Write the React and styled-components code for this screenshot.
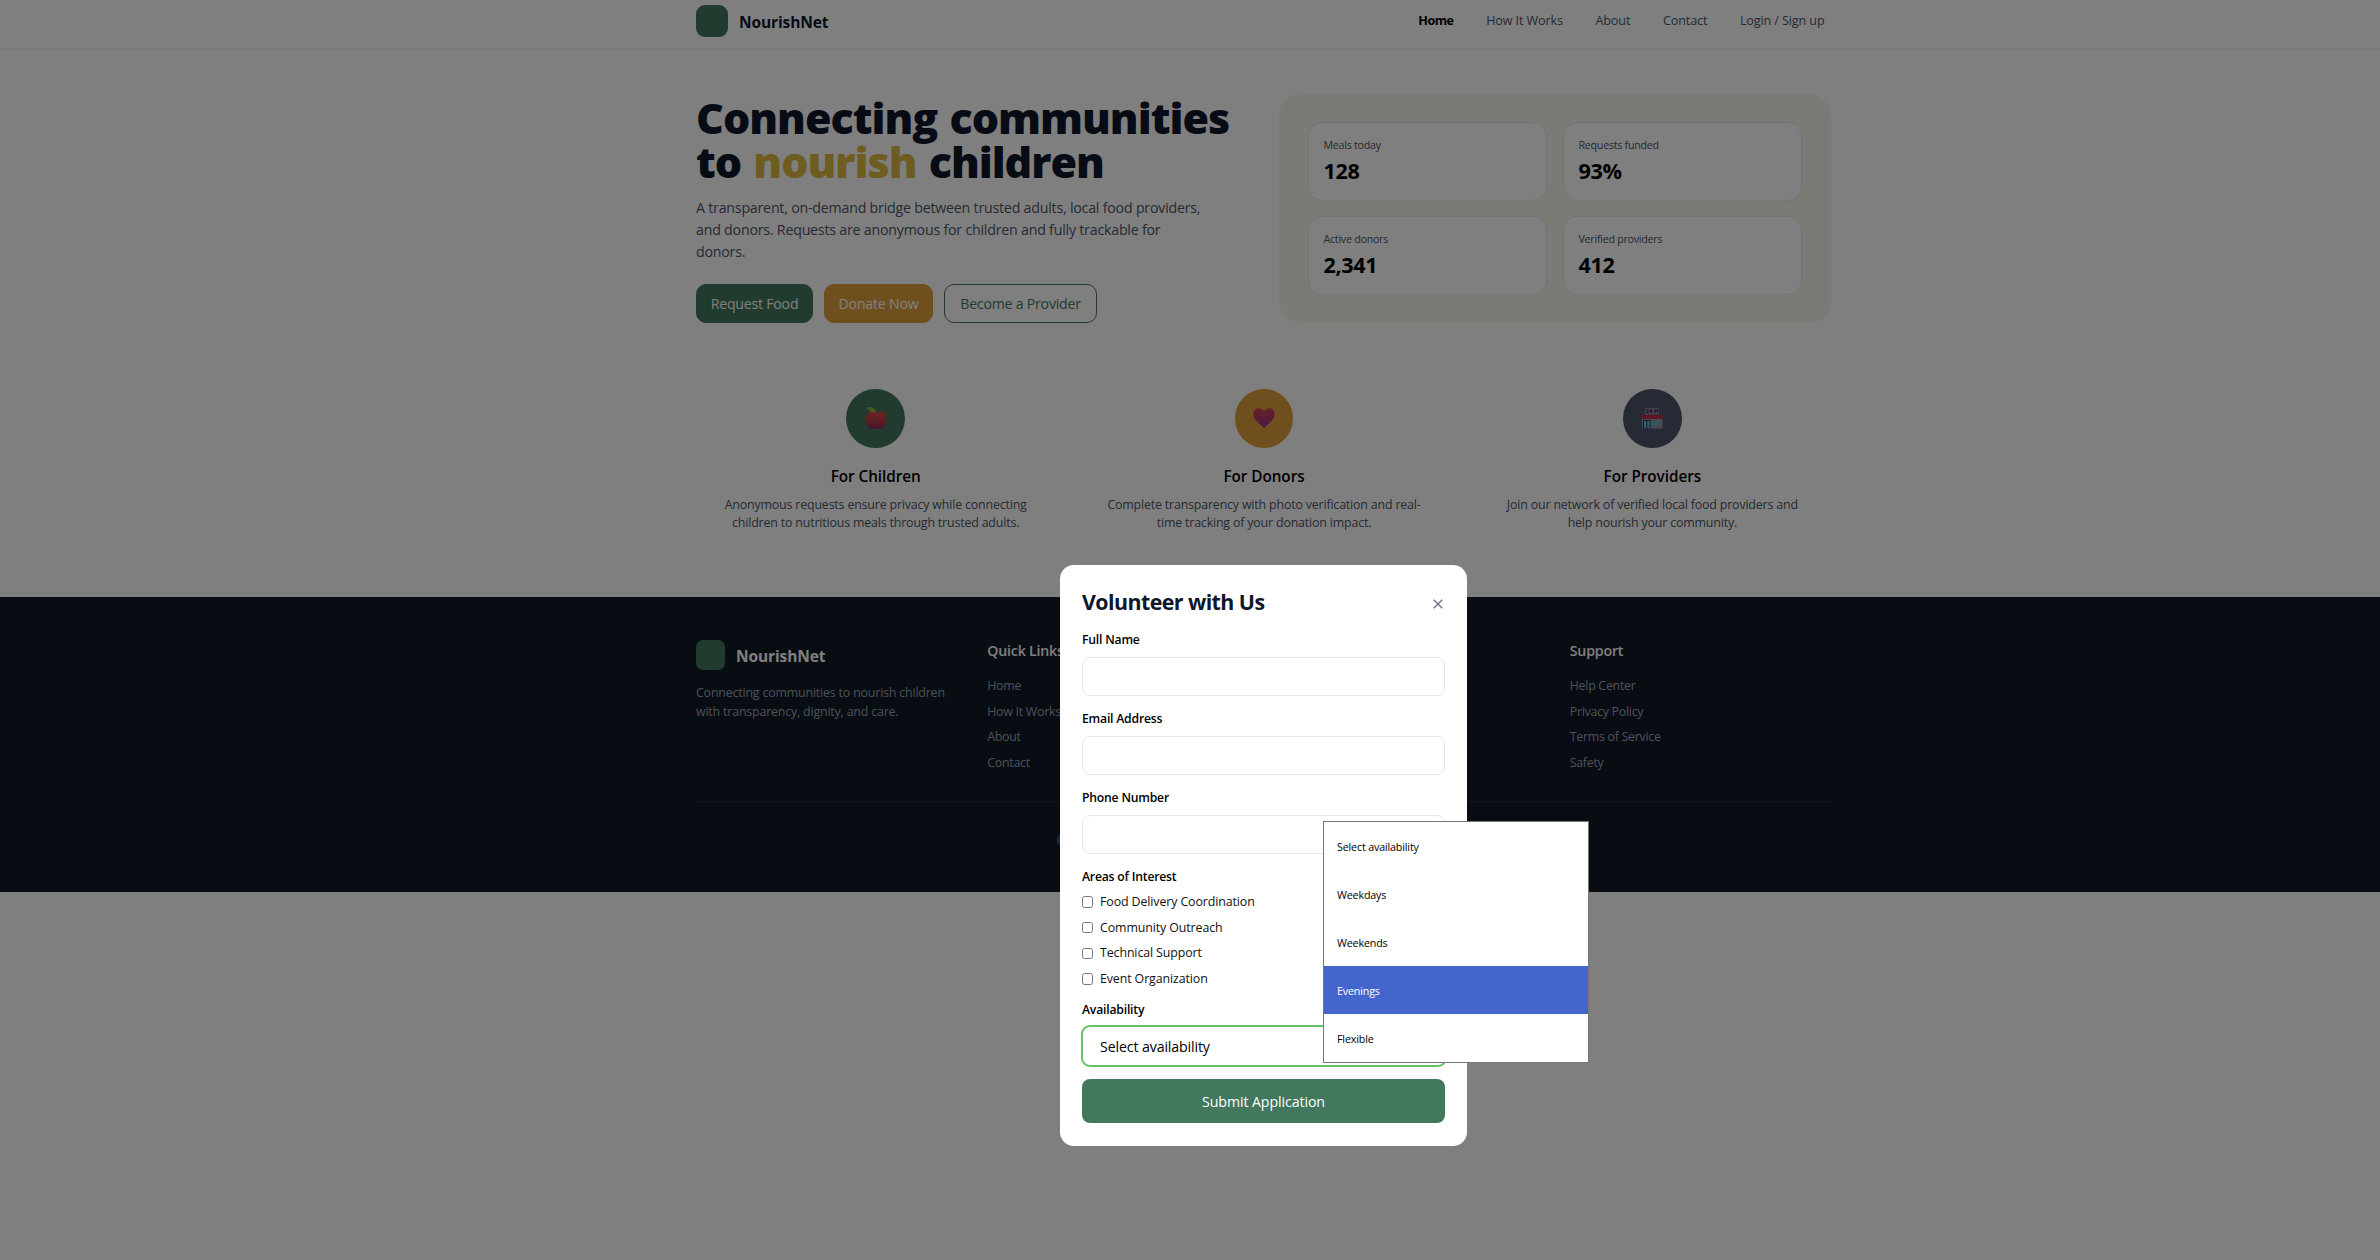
import React from "react";
import styled, { createGlobalStyle, css } from "styled-components";

const colors = {
  green: "#42785d",
  amber: "#e09f3e",
  gold: "#deb841",
  slate: "#4a5568",
  ink: "#0f172a",
  line: "#e5e7eb",
};

const GlobalStyle = createGlobalStyle`
  *, *::before, *::after { box-sizing: border-box; }
  body {
    margin: 0;
    background: #fff;
    color: #000;
    font-family: "Open Sans", "Noto Sans", sans-serif;
    overflow: hidden;
  }
  h1, h2, h3, h4, p, ul { margin: 0; padding: 0; }
  ul { list-style: none; }
  button, input { font-family: inherit; }
`;

const Page = styled.div`
  position: relative;
  width: 2380px;
  height: 1260px;
  overflow: hidden;
`;

const container = css`
  width: 1136px;
  margin-left: 696px;
`;

/* Header */
const Header = styled.header`
  height: 49px;
  padding-top: 5px;
  border-bottom: 1px solid #efefef;
`;
const HeaderInner = styled.div`
  ${container}
  display: flex;
  justify-content: space-between;
  align-items: flex-start;
`;
const Brand = styled.div`
  display: flex;
  gap: 11px;
  font-size: 15.5px;
  font-weight: 700;
  letter-spacing: -0.12px;
  line-height: ${(p) => p.$line}px;
  color: ${(p) => p.$color};
`;
const Logo = styled.span`
  width: ${(p) => p.$w}px;
  height: ${(p) => p.$h}px;
  border-radius: ${(p) => p.$r}px;
  background: ${colors.green};
`;
const Nav = styled.nav`
  display: flex;
  gap: 32.6px;
  padding-right: 7.5px;
`;
const NavLink = styled.a`
  font-size: 12.6px;
  line-height: 32px;
  letter-spacing: ${(p) => (p.$active ? -0.5 : -0.12)}px;
  font-weight: ${(p) => (p.$active ? 700 : 400)};
  color: ${(p) => (p.$active ? "#000" : colors.slate)};
`;

/* Hero */
const Hero = styled.section`
  ${container}
  display: grid;
  grid-template-columns: 552px 552px;
  gap: 31px;
  height: 274px;
  padding-top: 45px;
`;
const HeroCopy = styled.div`
  padding-top: 2px;
`;
const HeroTitle = styled.h1`
  font-size: 43px;
  font-weight: 800;
  line-height: 44px;
  letter-spacing: -1px;
  word-spacing: 2px;
  color: ${colors.ink};
  white-space: nowrap;
`;
const Accent = styled.span`
  color: ${colors.gold};
`;
const HeroText = styled.p`
  margin-top: 13px;
  font-size: 14.2px;
  line-height: 22px;
  letter-spacing: -0.21px;
  color: ${colors.slate};
  white-space: nowrap;
`;
const Actions = styled.div`
  display: flex;
  gap: 11px;
  margin-top: 21px;
`;
const Action = styled.button`
  width: ${(p) => p.$w}px;
  height: 39px;
  padding: 0;
  border: 1.5px solid ${(p) => p.$edge};
  border-radius: 10px;
  background: ${(p) => p.$bg};
  color: ${(p) => p.$fg};
  font-size: 14.2px;
  letter-spacing: -0.25px;
  white-space: nowrap;
`;
const StatsPanel = styled.div`
  display: grid;
  grid-template-columns: 239px 239px;
  grid-auto-rows: 79px;
  justify-content: center;
  gap: 15px 16px;
  height: 229px;
  padding: 28px 0;
  border-radius: 22px;
  background: #f9f5eb;
`;
const StatCard = styled.div`
  padding: 14px 14.5px;
  border: 1px solid ${colors.line};
  border-radius: 14px;
  background: #fff;
`;
const StatLabel = styled.div`
  font-size: 10.7px;
  line-height: 16px;
  letter-spacing: -0.26px;
  color: ${colors.slate};
`;
const StatValue = styled.div`
  margin-top: 3px;
  font-size: 21.6px;
  line-height: 29px;
  font-weight: 700;
  letter-spacing: -0.35px;
`;

/* Features */
const Features = styled.section`
  ${container}
  display: grid;
  grid-template-columns: repeat(3, 1fr);
  gap: 29px;
  height: 273.5px;
  padding-top: 66px;
`;
const Feature = styled.article`
  display: flex;
  flex-direction: column;
  align-items: center;
  text-align: center;
`;
const FeatureIcon = styled.div`
  display: grid;
  place-items: center;
  width: 58.5px;
  height: 58.5px;
  border-radius: 50%;
  background: ${(p) => p.$bg};
`;
const FeatureTitle = styled.h3`
  margin-top: 16.5px;
  font-size: 15.3px;
  line-height: 24px;
  font-weight: 600;
  letter-spacing: -0.05px;
`;
const FeatureText = styled.p`
  margin-top: 7.5px;
  font-size: 12.4px;
  line-height: 18px;
  letter-spacing: -0.17px;
  color: ${colors.slate};
  white-space: nowrap;
`;

/* Footer */
const Footer = styled.footer`
  height: 295.5px;
  padding-top: 43.5px;
  background: #111827;
`;
const FooterGrid = styled.div`
  ${container}
  display: grid;
  grid-template-columns: repeat(4, 262.25px);
  gap: 29px;
  height: 161.5px;
  border-bottom: 1px solid #222b3a;
`;
const FooterColumn = styled.div`
  grid-column: ${(p) => p.$col};
`;
const FooterText = styled.p`
  margin-top: 11px;
  font-size: 12.4px;
  line-height: 19px;
  letter-spacing: -0.18px;
  color: #9ca3af;
  white-space: nowrap;
`;
const FooterHeading = styled.h4`
  font-size: 14.2px;
  line-height: 22px;
  font-weight: 600;
  letter-spacing: -0.2px;
  color: #fff;
`;
const FooterLinks = styled.ul`
  display: grid;
  gap: 7.7px;
  margin-top: 14.9px;
  font-size: 12.4px;
  line-height: 18px;
  letter-spacing: -0.28px;
  color: #9ca3af;
`;
const Copyright = styled.p`
  width: 413px;
  margin: 30px 0 0 1056.5px;
  font-size: 12.4px;
  line-height: 18px;
  color: #9ca3af;
`;

/* Modal */
const Overlay = styled.div`
  position: absolute;
  inset: 0;
  background: rgba(0, 0, 0, 0.5);
`;
const Modal = styled.div`
  position: absolute;
  left: 1060px;
  top: 565px;
  width: 407px;
  height: 580.5px;
  padding: 22px;
  border-radius: 14px;
  background: #fff;
`;
const ModalHeader = styled.div`
  display: flex;
  justify-content: space-between;
  height: 30px;
  padding-right: 2px;
`;
const ModalTitle = styled.h2`
  font-size: 21.4px;
  line-height: 30px;
  font-weight: 700;
  letter-spacing: -0.57px;
  color: ${colors.ink};
`;
const CloseButton = styled.button`
  display: grid;
  place-items: center;
  width: 10px;
  height: 33px;
  padding: 0;
  border: 0;
  background: none;
  color: #6b7280;
`;
const Form = styled.form`
  display: grid;
  gap: 13.5px;
  margin-top: 14.2px;
`;
const Label = styled.div`
  font-size: 12.2px;
  line-height: 18px;
  font-weight: 600;
  letter-spacing: -0.2px;
`;
const Field = styled.div`
  display: grid;
  gap: ${(p) => p.$gap || 7.8}px;
`;
const TextInput = styled.input`
  width: 100%;
  height: 39.5px;
  border: 1.5px solid ${colors.line};
  border-radius: 8px;
  background: #fff;
`;
const Options = styled.div`
  display: grid;
  gap: 7.6px;
`;
const Option = styled.label`
  display: flex;
  align-items: center;
  gap: 7px;
  font-size: 12.4px;
  line-height: 18px;
  letter-spacing: -0.11px;
  color: #111;
`;
const Checkbox = styled.span`
  width: 11.5px;
  height: 11.5px;
  margin-left: -0.5px;
  border: 1px solid #767676;
  border-radius: 2.5px;
`;
const Select = styled.div`
  width: 366px;
  height: 42px;
  margin: 0 -1.5px;
  padding: 1px 0 0 17.5px;
  border: 2px solid #66c166;
  border-radius: 9px;
  font-size: 14.2px;
  line-height: 38px;
  letter-spacing: -0.13px;
`;
const Submit = styled.button`
  height: 44px;
  margin-top: -1px;
  padding: 0;
  border: 0;
  border-radius: 8px;
  background: ${colors.green};
  color: #fff;
  font-size: 14.2px;
  font-weight: 500;
  letter-spacing: -0.1px;
`;
const Menu = styled.ul`
  position: absolute;
  left: 1323px;
  top: 821px;
  width: 266px;
  border: 1px solid #767676;
  background: #fff;
`;
const MenuItem = styled.li`
  height: 48px;
  padding: 1px 0 0 13px;
  background: ${(p) => (p.$active ? "#4466cc" : "#fff")};
  color: ${(p) => (p.$active ? "#fff" : "#000")};
  font-size: 10.7px;
  line-height: 48px;
  letter-spacing: -0.15px;
`;

const AppleIcon = () => (
  <svg width="22" height="24" viewBox="0 0 22 24">
    <defs>
      <linearGradient id="apple" x1="0" y1="0" x2="0" y2="1">
        <stop offset="0" stopColor="#d04a46" />
        <stop offset="0.55" stopColor="#b83a48" />
        <stop offset="1" stopColor="#8a2a68" />
      </linearGradient>
    </defs>
    <path d="M11 6.200C7 4.500 .5 5 .5 12.500C.5 18 3 23 6.500 23C8.500 23 9 22.800 11 22.800C13 22.800 13.500 23 15.500 23C19 23 21.500 18 21.500 12.500C21.500 5 15 4.500 11 6.200Z" fill="url(#apple)" />
    <path d="M1.500 1.200C6 .3 10.500 1.500 11 6.200C6 6.800 3.500 4.500 1.500 1.200Z" fill="#8fae3a" />
  </svg>
);

const HeartIcon = () => (
  <svg width="22" height="20" viewBox="0 0 22 20">
    <defs>
      <linearGradient id="heart" x1="0" y1="0" x2="0" y2="1">
        <stop offset="0" stopColor="#c94352" />
        <stop offset="0.5" stopColor="#b83562" />
        <stop offset="1" stopColor="#943090" />
      </linearGradient>
    </defs>
    <path d="M11 19.800C6 15.500 .2 11.500 .2 6C.2 2.500 2.700 .3 5.700 .3C8 .3 10 1.500 11 3.500C12 1.500 14 .3 16.300 .3C19.300 .3 21.800 2.500 21.800 6C21.800 11.500 16 15.500 11 19.800Z" fill="url(#heart)" />
  </svg>
);

const StoreLabel = styled.text`
  font: 700 6px "Open Sans", sans-serif;
  fill: #2b1c3c;
`;
const StoreIcon = () => (
  <svg width="22" height="21" viewBox="0 0 22 21">
    <rect x="4" y="0" width="14" height="6.500" fill="#8d7f9c" />
    <StoreLabel x="11" y="5.400" textAnchor="middle">24 H</StoreLabel>
    <rect x="1" y="10" width="20.500" height="10.500" fill="#9b8fa0" />
    <rect x="0" y="7" width="22" height="4" rx="0.500" fill="#b5304f" />
    <rect x="2" y="12" width="7.500" height="8.500" fill="#25476f" />
    <rect x="3" y="13" width="2.300" height="7" fill="#69b4d6" />
    <rect x="6.300" y="13" width="2.300" height="7" fill="#69b4d6" />
    <rect x="11.500" y="13.500" width="7.500" height="3.500" fill="#5fb6c4" />
  </svg>
);

const CloseIcon = () => (
  <svg width="10" height="10" viewBox="0 0 10 10" stroke="currentColor" strokeWidth="1.400">
    <path d="M.7 .7L9.300 9.300M9.300 .7L.7 9.300" />
  </svg>
);

const navItems = ["Home", "How It Works", "About", "Contact", "Login / Sign up"];
const stats = [
  ["Meals today", "128"],
  ["Requests funded", "93%"],
  ["Active donors", "2,341"],
  ["Verified providers", "412"],
];
const features = [
  { title: "For Children", bg: colors.green, icon: <AppleIcon />, lines: ["Anonymous requests ensure privacy while connecting", "children to nutritious meals through trusted adults."] },
  { title: "For Donors", bg: colors.amber, icon: <HeartIcon />, lines: ["Complete transparency with photo verification and real-", "time tracking of your donation impact."] },
  { title: "For Providers", bg: colors.slate, icon: <StoreIcon />, lines: ["Join our network of verified local food providers and", "help nourish your community."] },
];
const footerColumns = [
  { col: 2, title: "Quick Links", links: ["Home", "How It Works", "About", "Contact"] },
  { col: 4, title: "Support", links: ["Help Center", "Privacy Policy", "Terms of Service", "Safety"] },
];
const interests = ["Food Delivery Coordination", "Community Outreach", "Technical Support", "Event Organization"];
const availability = ["Select availability", "Weekdays", "Weekends", "Evenings", "Flexible"];

export default function App() {
  return (
    <Page>
      <GlobalStyle />
      <Header>
        <HeaderInner>
          <Brand $line={34} $color={colors.ink}>
            <Logo $w={32} $h={32} $r={9} />
            NourishNet
          </Brand>
          <Nav>
            {navItems.map((item) => (
              <NavLink key={item} $active={item === "Home"}>{item}</NavLink>
            ))}
          </Nav>
        </HeaderInner>
      </Header>

      <Hero>
        <HeroCopy>
          <HeroTitle>
            Connecting communities
            <br />
            to <Accent>nourish</Accent> children
          </HeroTitle>
          <HeroText>
            A transparent, on-demand bridge between trusted adults, local food providers,
            <br />
            and donors. Requests are anonymous for children and fully trackable for
            <br />
            donors.
          </HeroText>
          <Actions>
            <Action $w={117} $bg={colors.green} $edge={colors.green} $fg="#fff">Request Food</Action>
            <Action $w={109} $bg={colors.amber} $edge={colors.amber} $fg="#fff">Donate Now</Action>
            <Action $w={153} $bg="#fff" $edge={colors.green} $fg={colors.green}>Become a Provider</Action>
          </Actions>
        </HeroCopy>
        <StatsPanel>
          {stats.map(([label, value]) => (
            <StatCard key={label}>
              <StatLabel>{label}</StatLabel>
              <StatValue>{value}</StatValue>
            </StatCard>
          ))}
        </StatsPanel>
      </Hero>

      <Features>
        {features.map((f) => (
          <Feature key={f.title}>
            <FeatureIcon $bg={f.bg}>{f.icon}</FeatureIcon>
            <FeatureTitle>{f.title}</FeatureTitle>
            <FeatureText>
              {f.lines[0]}
              <br />
              {f.lines[1]}
            </FeatureText>
          </Feature>
        ))}
      </Features>

      <Footer>
        <FooterGrid>
          <FooterColumn $col={1}>
            <Brand $line={32} $color="#fff">
              <Logo $w={29} $h={30} $r={7} />
              NourishNet
            </Brand>
            <FooterText>
              Connecting communities to nourish children
              <br />
              with transparency, dignity, and care.
            </FooterText>
          </FooterColumn>
          {footerColumns.map((c) => (
            <FooterColumn key={c.title} $col={c.col}>
              <FooterHeading>{c.title}</FooterHeading>
              <FooterLinks>
                {c.links.map((link) => (
                  <li key={link}>{link}</li>
                ))}
              </FooterLinks>
            </FooterColumn>
          ))}
        </FooterGrid>
        <Copyright>©</Copyright>
      </Footer>

      <Overlay />
      <Modal>
        <ModalHeader>
          <ModalTitle>Volunteer with Us</ModalTitle>
          <CloseButton type="button" aria-label="Close">
            <CloseIcon />
          </CloseButton>
        </ModalHeader>
        <Form>
          {["Full Name", "Email Address", "Phone Number"].map((name) => (
            <Field key={name}>
              <Label>{name}</Label>
              <TextInput />
            </Field>
          ))}
          <Field $gap={7.5}>
            <Label>Areas of Interest</Label>
            <Options>
              {interests.map((item) => (
                <Option key={item}>
                  <Checkbox />
                  {item}
                </Option>
              ))}
            </Options>
          </Field>
          <Field $gap={5.5}>
            <Label>Availability</Label>
            <Select>Select availability</Select>
          </Field>
          <Submit type="button">Submit Application</Submit>
        </Form>
      </Modal>
      <Menu>
        {availability.map((item) => (
          <MenuItem key={item} $active={item === "Evenings"}>{item}</MenuItem>
        ))}
      </Menu>
    </Page>
  );
}
